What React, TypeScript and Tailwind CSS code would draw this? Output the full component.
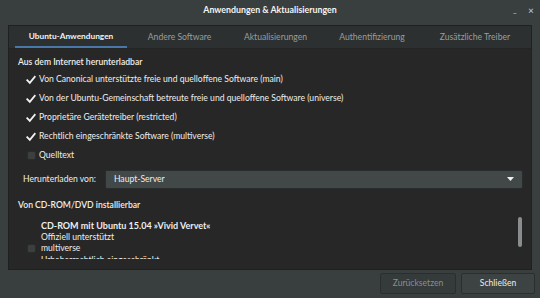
import React from "react";

const font = { fontFamily: 'Lato, "Open Sans", sans-serif' };

function Check({ checked }: { checked: boolean }) {
  return (
    <div className="w-[10px] h-[10px] flex items-center justify-center">
      {checked ? (
        <svg width="10" height="10" viewBox="0 0 10 10">
          <path d="M1.2 5.2 L3.8 7.8 L8.8 1.8" stroke="#f2f2f2" strokeWidth="1.8" fill="none" strokeLinecap="square" />
        </svg>
      ) : (
        <div className="w-[9px] h-[9px] rounded-[2px] bg-[#3c3f3f] border border-[#2a2c2c]" />
      )}
    </div>
  );
}

function Row({ checked, label }: { checked: boolean; label: string }) {
  return (
    <div className="flex items-center h-[19px] pl-[17px] gap-[3px]">
      <Check checked={checked} />
      <span>{label}</span>
    </div>
  );
}

export default function App() {
  const tabs = [
    { t: "Andere Software", w: "w-[97px]" },
    { t: "Aktualisierungen", w: "w-[95px]" },
    { t: "Authentifizierung", w: "w-[98px]" },
    { t: "Zusätzliche Treiber", w: "w-[108px]" },
  ];
  return (
    <div className="w-[540px] h-[298px] bg-[#393e3e] text-[#eeeeec] text-[8.6px] flex flex-col overflow-hidden" style={font}>
      <div className="h-[19px] flex items-center relative shrink-0 bg-[#393e3e]">
        <div className="flex-1 text-center font-bold text-[8.8px] text-[#f4f4f4]">Anwendungen &amp; Aktualisierungen</div>
        <div className="absolute left-[513px] top-[4px] text-[8px] text-[#cfd0d0]">_</div>
        <div className="absolute left-[528px] top-[3px] text-[10px] text-[#cfd0d0]">×</div>
      </div>
      <div className="mx-[8px] mt-[6px] h-[245px] border border-[#1f2121] flex flex-col shrink-0">
        <div className="h-[23px] bg-[#2d3030] flex items-stretch border-b border-[#232424] shrink-0">
          <div className="w-[112px] ml-[6px] flex items-center justify-center font-bold text-[8.3px] text-[#f0f0f0] border-b-[2px] border-[#4a77a8]">
            Ubuntu-Anwendungen
          </div>
          <div className="w-[4px]" />
          {tabs.map((x) => (
            <div key={x.t} className={`${x.w} flex items-center justify-center text-[#9a9d9d]`}>
              {x.t}
            </div>
          ))}
        </div>
        <div className="flex-1 bg-[#272727] flex overflow-hidden relative">
          <div className="flex-1 flex flex-col pt-[5px] pr-[8px]">
            <div className="pl-[9px] h-[16px] flex items-center font-semibold">Aus dem Internet herunterladbar</div>
            <Row checked label="Von Canonical unterstützte freie und quelloffene Software (main)" />
            <Row checked label="Von der Ubuntu-Gemeinschaft betreute freie und quelloffene Software (universe)" />
            <Row checked label="Proprietäre Gerätetreiber (restricted)" />
            <Row checked label="Rechtlich eingeschränkte Software (multiverse)" />
            <Row checked={false} label="Quelltext" />
            <div className="flex items-center mt-[4px] pl-[14px] gap-[9px] h-[20px]">
              <span>Herunterladen von:</span>
              <div className="flex-1 h-[19px] rounded-[2px] bg-[#424747] border border-[#2a2d2d] flex items-center justify-between px-[8px]">
                <span>Haupt-Server</span>
                <svg width="7" height="5" viewBox="0 0 7 5"><path d="M0 0 H7 L3.5 4 Z" fill="#f0f0f0" /></svg>
              </div>
            </div>
            <div className="pl-[9px] mt-[8px] h-[16px] flex items-center font-semibold">Von CD-ROM/DVD installierbar</div>
            <div className="flex pl-[17px] mt-[7px] gap-[5px] overflow-hidden h-[39px]">
              <div className="flex items-center h-[40px] mt-[8px]"><Check checked={false} /></div>
              <div className="flex flex-col leading-[11.5px]">
                <span className="font-bold text-[9px]">CD-ROM mit Ubuntu 15.04 »Vivid Vervet«</span>
                <span>Offiziell unterstützt</span>
                <span>multiverse</span>
                <span>Urheberrechtlich eingeschränkt</span>
              </div>
            </div>
          </div>
          <div className="absolute right-[9px] top-[168px] w-[4px] h-[30px] rounded-full bg-[#8a8d8d]" />
        </div>
      </div>
      <div className="flex justify-end gap-[5px] pr-[5px] mt-[3px]">
        <div className="w-[76px] h-[21px] flex items-center justify-center bg-[#353a3a] border border-[#2a2e2e] rounded-[2px] text-[#8a8e8e]">Zurücksetzen</div>
        <div className="w-[74px] h-[21px] flex items-center justify-center bg-[#3d4242] border border-[#2a2e2e] rounded-[2px] text-[#eeeeec]">Schließen</div>
      </div>
    </div>
  );
}
